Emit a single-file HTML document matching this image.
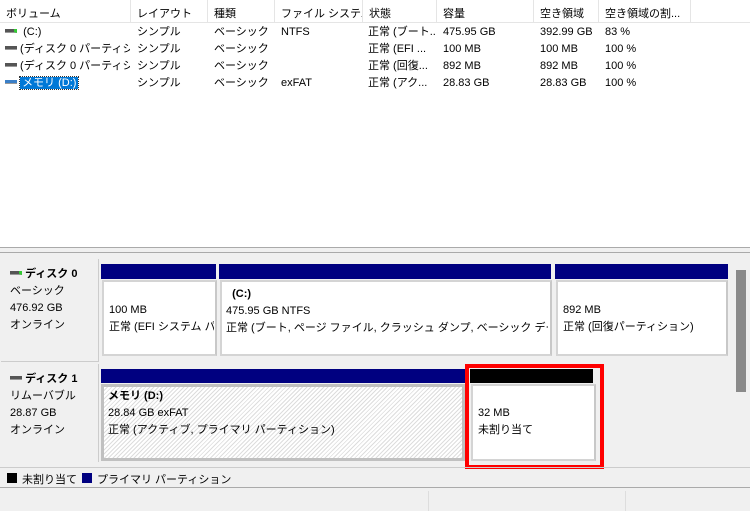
<!DOCTYPE html>
<html><head><meta charset="utf-8"><style>
*{margin:0;padding:0;box-sizing:border-box}
body{width:750px;height:511px;overflow:hidden;background:#f0f0f0;font-family:"Liberation Sans","Noto Sans CJK JP",sans-serif;font-size:11px;color:#000;position:relative}
.a{position:absolute;white-space:nowrap}
.c{position:absolute;white-space:nowrap;overflow:hidden;line-height:17px}
.hd{position:absolute;top:0;height:22px;border-right:1px solid #e5e5e5;padding:5px 0 0 6px;background:#fff;white-space:nowrap;overflow:hidden}
.bar{position:absolute;background:#000080}
.box{position:absolute;background:#fff;border:2px solid #d4d4d4;border-right-color:#c8c8c8}
.drv{display:inline-block;width:12px;height:4px;background:#555;border-bottom:1px solid #999;position:relative;top:-2px}
</style></head><body>
<div class="a" style="left:0;top:0;width:750px;height:248px;background:#fff;border-bottom:1px solid #aaa"></div>
<div class="a" style="left:0;top:22px;width:750px;height:1px;background:#e5e5e5"></div>
<div class="hd" style="left:0;width:131px">ボリューム</div>
<div class="hd" style="left:131px;width:77px">レイアウト</div>
<div class="hd" style="left:208px;width:67px">種類</div>
<div class="hd" style="left:275px;width:88px">ファイル システム</div>
<div class="hd" style="left:363px;width:74px">状態</div>
<div class="hd" style="left:437px;width:97px">容量</div>
<div class="hd" style="left:534px;width:65px">空き領域</div>
<div class="hd" style="left:599px;width:92px">空き領域の割...</div>
<div class="c" style="left:5px;top:24px;width:125px;line-height:17px">
<div><span class="drv" style="border-right:3px solid #3c3"></span>&nbsp; (C:)</div>
<div><span class="drv"></span> (ディスク 0 パーティショ...</div>
<div><span class="drv"></span> (ディスク 0 パーティショ...</div>
<div><span class="drv" style="background:#3a7fc8"></span> <span style="background:#0078d7;color:#fff;outline:1px dotted #333;padding:0 2px">メモリ (D:)</span></div>
</div>
<div class="c" style="left:137px;top:24px;width:68px">シンプル<br>シンプル<br>シンプル<br>シンプル</div>
<div class="c" style="left:214px;top:24px;width:58px">ベーシック<br>ベーシック<br>ベーシック<br>ベーシック</div>
<div class="c" style="left:281px;top:24px;width:78px">NTFS<br><br><br>exFAT</div>
<div class="c" style="left:368px;top:24px;width:68px">正常 (ブート...<br>正常 (EFI ...<br>正常 (回復...<br>正常 (アク...</div>
<div class="c" style="left:443px;top:24px;width:88px">475.95 GB<br>100 MB<br>892 MB<br>28.83 GB</div>
<div class="c" style="left:540px;top:24px;width:58px">392.99 GB<br>100 MB<br>892 MB<br>28.83 GB</div>
<div class="c" style="left:605px;top:24px;width:80px">83 %<br>100 %<br>100 %<br>100 %</div>

<div class="a" style="left:0;top:252px;width:750px;height:1px;background:#aaa"></div>
<!-- disk 0 -->
<div class="a" style="left:1px;top:259px;width:98px;height:103px;background:#f0f0f0;border-right:1px solid #ccc;border-bottom:1px solid #ccc"></div>
<div class="a" style="left:10px;top:266px;line-height:17px"><span class="drv" style="border-right:3px solid #3c3"></span> <b>ディスク 0</b><br>ベーシック<br>476.92 GB<br>オンライン</div>
<div class="bar" style="left:101px;top:264px;width:115px;height:15px"></div>
<div class="bar" style="left:219px;top:264px;width:332px;height:15px"></div>
<div class="bar" style="left:555px;top:264px;width:173px;height:15px"></div>
<div class="box" style="left:102px;top:280px;width:115px;height:76px"></div>
<div class="box" style="left:220px;top:280px;width:332px;height:76px"></div>
<div class="box" style="left:556px;top:280px;width:172px;height:76px"></div>
<div class="c" style="left:109px;top:302px;width:105px">100 MB<br>正常 (EFI システム パーティション)</div>
<div class="c" style="left:226px;top:286px;width:322px">&nbsp;&nbsp;<b>(C:)</b><br>475.95 GB NTFS<br>正常 (ブート, ページ ファイル, クラッシュ ダンプ, ベーシック データ パーティション)</div>
<div class="c" style="left:563px;top:302px;width:160px">892 MB<br>正常 (回復パーティション)</div>
<!-- disk 1 -->
<div class="a" style="left:1px;top:364px;width:98px;height:98px;background:#f0f0f0;border-right:1px solid #ccc"></div>
<div class="a" style="left:10px;top:371px;line-height:17px"><span class="drv"></span> <b>ディスク 1</b><br>リムーバブル<br>28.87 GB<br>オンライン</div>
<div class="bar" style="left:101px;top:369px;width:364px;height:14px"></div>
<div class="a" style="left:101px;top:384px;width:364px;height:77px;border:3px solid #c0c0c0;background:repeating-linear-gradient(135deg,#fff 0 2px,#ddd 2px 3px)"></div>
<div class="a" style="left:108px;top:388px;line-height:17px"><b>メモリ (D:)</b><br>28.84 GB exFAT<br>正常 (アクティブ, プライマリ パーティション)</div>
<div class="a" style="left:470px;top:369px;width:123px;height:14px;background:#000"></div>
<div class="box" style="left:471px;top:384px;width:125px;height:77px"></div>
<div class="a" style="left:478px;top:405px;line-height:17px">32 MB<br>未割り当て</div>
<div class="a" style="left:465px;top:364px;width:139px;height:105px;border:4px solid #f00"></div>
<!-- scrollbar -->
<div class="a" style="left:734px;top:258px;width:16px;height:210px;background:#f0f0f0"></div>
<div class="a" style="left:736px;top:270px;width:10px;height:122px;background:#8a8a8a"></div>
<!-- legend -->
<div class="a" style="left:0;top:467px;width:750px;height:21px;border-top:1px solid #ccc;border-bottom:1px solid #aaa"></div>
<div class="a" style="left:7px;top:473px;width:10px;height:10px;background:#000"></div>
<div class="a" style="left:22px;top:471px">未割り当て</div>
<div class="a" style="left:82px;top:473px;width:10px;height:10px;background:#000080"></div>
<div class="a" style="left:97px;top:471px">プライマリ パーティション</div>
<div class="a" style="left:428px;top:491px;width:1px;height:20px;background:#ddd"></div>
<div class="a" style="left:625px;top:491px;width:1px;height:20px;background:#ddd"></div>
</body></html>
